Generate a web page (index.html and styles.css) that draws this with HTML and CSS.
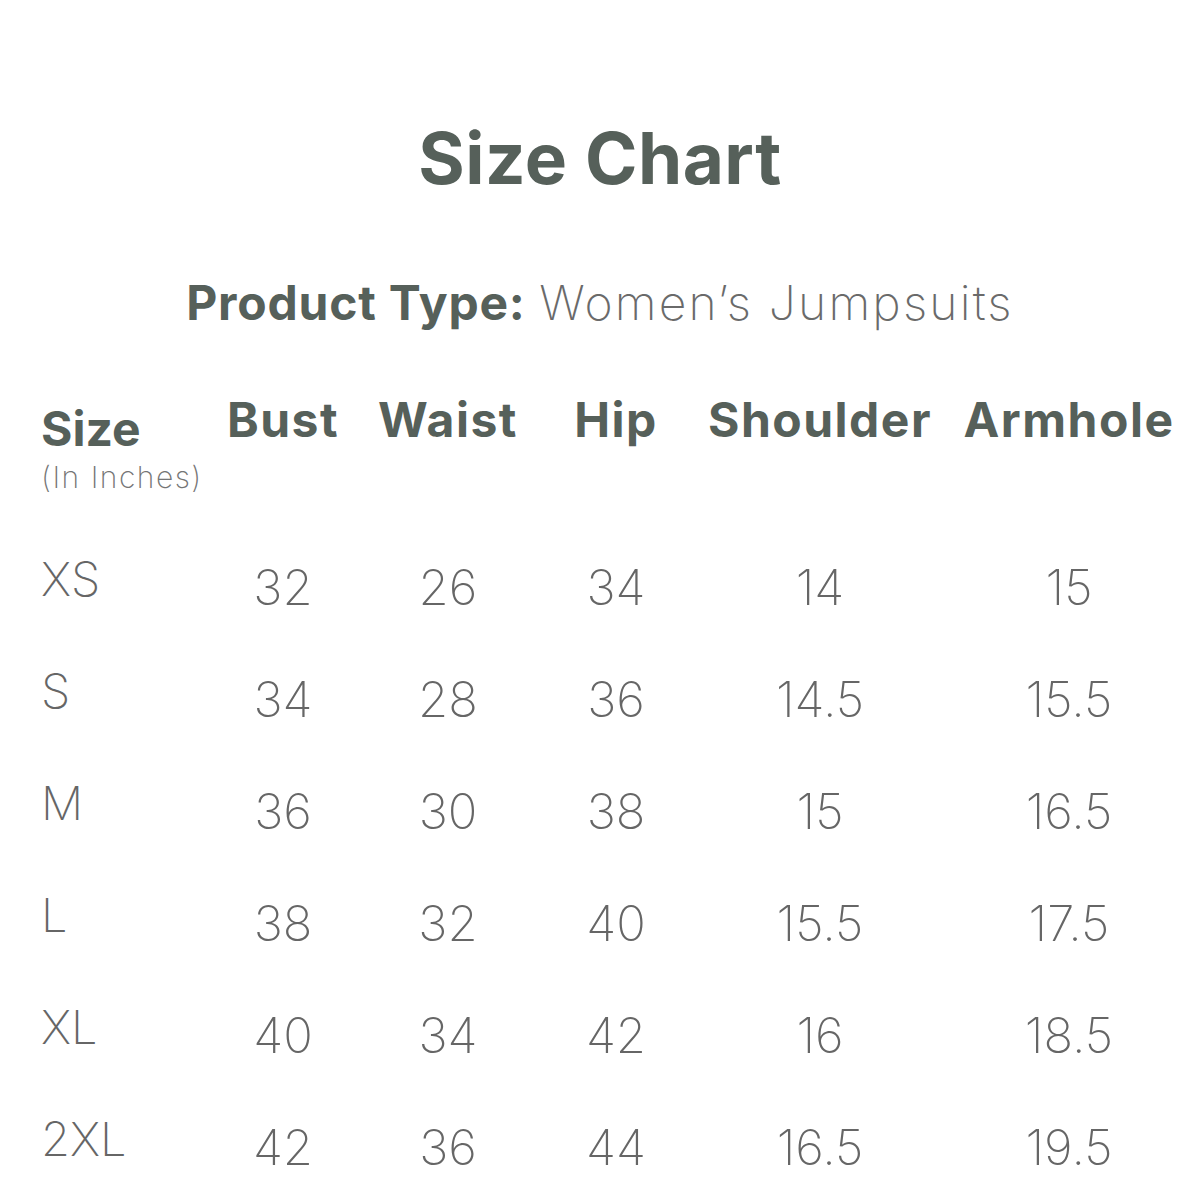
FILE: index.html
```html
<!DOCTYPE html>
<html lang="en">
<head>
<meta charset="utf-8">
<title>Size Chart</title>
<link rel="stylesheet" href="styles.css">
</head>
<body>
<main class="page">
  <h1 class="title">Size Chart</h1>
  <p class="product"><b class="product-label">Product Type:</b> <span class="product-value">Women’s Jumpsuits</span></p>
  <div class="chart">
    <div class="head head-size"><div class="head-size-main">Size</div><div class="unit">(In Inches)</div></div>
    <div class="head">Bust</div>
    <div class="head">Waist</div>
    <div class="head">Hip</div>
    <div class="head">Shoulder</div>
    <div class="head">Armhole</div>

    <div class="size">XS</div><div class="num">32</div><div class="num">26</div><div class="num">34</div><div class="num">14</div><div class="num">15</div>
    <div class="size">S</div><div class="num">34</div><div class="num">28</div><div class="num">36</div><div class="num">14.5</div><div class="num">15.5</div>
    <div class="size">M</div><div class="num">36</div><div class="num">30</div><div class="num">38</div><div class="num">15</div><div class="num">16.5</div>
    <div class="size">L</div><div class="num">38</div><div class="num">32</div><div class="num">40</div><div class="num">15.5</div><div class="num">17.5</div>
    <div class="size">XL</div><div class="num">40</div><div class="num">34</div><div class="num">42</div><div class="num">16</div><div class="num">18.5</div>
    <div class="size">2XL</div><div class="num">42</div><div class="num">36</div><div class="num">44</div><div class="num">16.5</div><div class="num">19.5</div>
  </div>
</main>
</body>
</html>
```
FILE: styles.css
```css
html, body {
  margin: 0;
  padding: 0;
  background: #ffffff;
}
.page {
  width: 1200px;
  height: 1200px;
  overflow: hidden;
  padding-top: 118px;
  box-sizing: border-box;
  font-family: Inter, "Noto Sans", sans-serif;
  color: #56605a;
}
.title {
  margin: 0;
  text-align: center;
  font-size: 71px;
  line-height: 80px;
  font-weight: 700;
  letter-spacing: 0.5px;
}
.product {
  margin: 75px 0 0;
  text-align: center;
  font-size: 48px;
  line-height: 60px;
}
.product-label {
  font-weight: 700;
  letter-spacing: 0.8px;
}
.product-value {
  font-weight: 200;
  color: #6a6a6a;
  letter-spacing: 2.2px;
}
.chart {
  margin-top: 57px;
  padding-left: 41px;
  display: grid;
  grid-template-columns: 159px 166px 164px 172px 236px 262px;
  grid-template-rows: 159px repeat(6, 112px);
}
.head {
  text-align: center;
  font-size: 48px;
  line-height: 60px;
  font-weight: 700;
  letter-spacing: 1.5px;
  white-space: nowrap;
}
.head-size {
  text-align: left;
  padding-top: 9px;
  letter-spacing: 0;
}
.unit {
  font-size: 30px;
  line-height: 36px;
  font-weight: 200;
  color: #757575;
  letter-spacing: 1.5px;
}
.size {
  font-size: 47px;
  line-height: 60px;
  font-weight: 200;
  color: #666666;
}
.num {
  text-align: center;
  padding-top: 9px;
  font-size: 49px;
  line-height: 60px;
  font-weight: 200;
  color: #666666;
}
```
